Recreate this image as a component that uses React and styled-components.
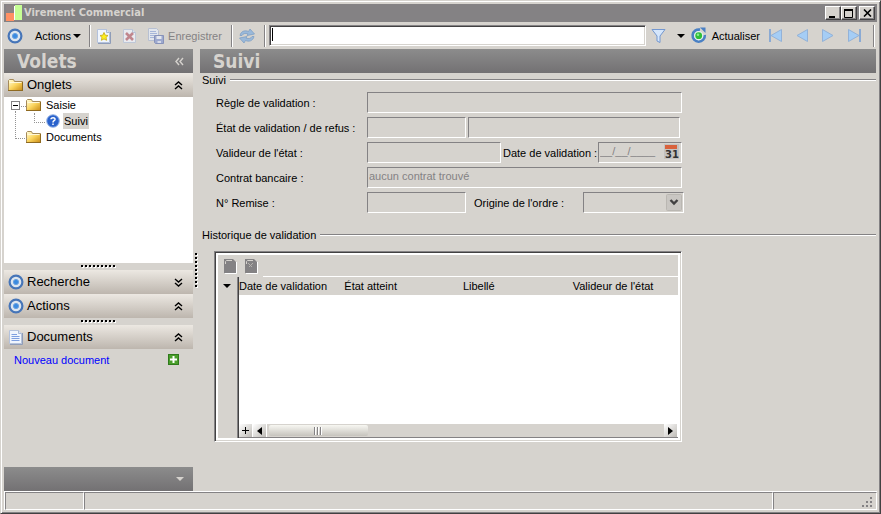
import React from 'react';
import styled, { createGlobalStyle, ThemeProvider } from 'styled-components';

const theme = {
    face: '#d6d3ce',
    shadow: '#848284',
    dark: '#424142',
    font: '"Liberation Sans", Arial, sans-serif',
    titleFont: '"DejaVu Sans Condensed", "DejaVu Sans", sans-serif',
};

const GlobalStyle = createGlobalStyle`
    * {
        box-sizing: border-box;
    }

    body {
        margin: 0;
        background: ${theme.face};
        color: black;
        font-family: ${theme.font};
        font-size: 11px;
        line-height: 16px;
    }

    button, input, select {
        font: inherit;
        color: inherit;
    }

    svg {
        display: block;
        flex: none;
    }
`;

const Window = styled.div`
    min-height: 100vh;
    display: flex;
    flex-direction: column;
    padding: 2px 2px 1px 2px;
    background: ${({ theme }) => theme.face};
    border: 1px solid;
    border-color: ${({ theme }) => `${theme.face} ${theme.dark} ${theme.dark} ${theme.face}`};
    box-shadow: inset 1px 1px 0 white, inset -1px -1px 0 ${({ theme }) => theme.shadow};
`;

const TitleBar = styled.header`
    height: 18px;
    display: flex;
    align-items: center;
    margin: 1px 1px 0 1px;
    padding: 0 2px;
    background: ${({ theme }) => theme.shadow};
    color: ${({ theme }) => theme.face};

    h1 {
        flex: 1;
        margin: 0 0 0 1px;
        font-family: ${({ theme }) => theme.titleFont};
        font-size: 11px;
        line-height: 18px;
        font-weight: bold;
    }
`;

const CaptionButton = styled.button`
    width: 16px;
    height: 14px;
    display: flex;
    align-items: center;
    justify-content: center;
    padding: 0;
    margin-left: ${({ $gap }) => ($gap ? '2px' : '0')};
    color: black;
    background: ${({ theme }) => theme.face};
    border: 1px solid;
    border-color: ${({ theme }) => `white ${theme.dark} ${theme.dark} white`};
    box-shadow: inset -1px -1px 0 ${({ theme }) => theme.shadow};
`;

const Toolbar = styled.div`
    height: 27px;
    display: flex;
    align-items: center;
    padding: 0 2px 0 3px;
    margin: 0 1px;
`;

const ToolButton = styled.button`
    height: 22px;
    display: flex;
    align-items: center;
    gap: ${({ $gap }) => $gap || 4}px;
    padding: 0;
    margin-right: ${({ $after }) => $after || 0}px;
    background: none;
    border: none;

    &:disabled {
        color: ${({ theme }) => theme.shadow};
    }
`;

const Separator = styled.span`
    width: 2px;
    height: 22px;
    margin-right: ${({ $after }) => $after || 0}px;
    border-left: 1px solid ${({ theme }) => theme.shadow};
    border-right: 1px solid white;
`;

const SearchBox = styled.div`
    flex: 1;
    position: relative;
    display: flex;
    margin-right: 5px;

    &::after {
        content: '';
        position: absolute;
        left: 3px;
        top: 3px;
        width: 1px;
        height: 13px;
        background: black;
    }
`;

const SearchInput = styled.input`
    width: 100%;
    height: 21px;
    padding: 0 4px;
    background: white;
    border: 1px solid;
    border-color: ${({ theme }) => `${theme.shadow} white white ${theme.shadow}`};
    box-shadow: inset 1px 1px 0 ${({ theme }) => theme.dark}, inset -1px -1px 0 ${({ theme }) => theme.face};
    outline: none;
`;

const Body = styled.div`
    flex: 1;
    display: flex;
    margin: 0 1px;
`;

const Sidebar = styled.aside`
    width: 189px;
    display: flex;
    flex-direction: column;
`;

const Banner = styled.div`
    height: 24px;
    display: flex;
    align-items: center;
    justify-content: space-between;
    padding: 0 9px 0 13px;
    color: ${({ theme }) => theme.face};
    background: linear-gradient(#8c8c8c, #737173);

    h2 {
        margin: 0;
        font-family: ${({ theme }) => theme.titleFont};
        font-size: 19px;
        line-height: 24px;
        font-weight: bold;
    }

    button {
        display: flex;
        padding: 0;
        color: inherit;
        background: none;
        border: none;
    }
`;

const PaneHeader = styled.button`
    width: 100%;
    height: 24px;
    display: flex;
    align-items: center;
    gap: 3px;
    padding: 0 10px 0 4px;
    font-size: 13px;
    text-align: left;
    background: linear-gradient(#ece8e2, #bdb6ae);
    border: none;

    svg:first-child {
        width: 16px;
    }

    span {
        flex: 1;
    }
`;

const Tree = styled.ul`
    flex: 1 1 166px;
    max-height: 166px;
    margin: 0;
    padding: 0 0 0 7px;
    list-style: none;
    background: white;
`;

const Branch = styled.ul`
    margin: 0;
    padding: 0 0 0 26px;
    list-style: none;
`;

const TreeItem = styled.li`
    position: relative;

    &::before {
        content: '';
        position: absolute;
        left: ${({ $nested }) => ($nested ? '-3px' : '4px')};
        top: ${({ $top }) => $top}px;
        width: ${({ $nested }) => ($nested ? '10px' : '11px')};
        height: ${({ $reach }) => $reach}px;
        border: 0 dotted #949494;
        border-left-width: ${({ $reach }) => ($reach > 1 ? '1px' : '0')};
        border-bottom-width: 1px;
    }
`;

const TreeRow = styled.div`
    height: 16px;
    display: flex;
    align-items: center;
    gap: 3px;
    padding-left: ${({ $nested }) => ($nested ? '9px' : '15px')};
`;

const TreeLabel = styled.span`
    padding: 0 1px;
    background: ${({ $selected, theme }) => ($selected ? theme.face : 'transparent')};
`;

const Expander = styled.button`
    position: absolute;
    left: 0;
    top: 4px;
    width: 9px;
    height: 9px;
    padding: 0;
    background: white;
    border: 1px solid ${({ theme }) => theme.shadow};

    &::before {
        content: '';
        display: block;
        width: 5px;
        height: 1px;
        margin: auto;
        background: black;
    }
`;

const Grip = styled.div`
    height: 7px;
    display: flex;
    justify-content: center;
    align-items: center;

    &::before {
        content: '';
        width: 35px;
        height: 3px;
        background:
            repeating-linear-gradient(90deg, black 0 2px, transparent 2px 4px) 0 0 / 100% 2px no-repeat,
            repeating-linear-gradient(90deg, transparent 0 1px, white 1px 3px, transparent 3px 4px) 0 1px / 100% 2px no-repeat;
    }
`;

const SideGrip = styled.div`
    width: 7px;
    display: flex;
    justify-content: center;
    align-items: center;

    &::before {
        content: '';
        width: 3px;
        height: 35px;
        background:
            repeating-linear-gradient(black 0 2px, transparent 2px 4px) 0 0 / 2px 100% no-repeat,
            repeating-linear-gradient(transparent 0 1px, white 1px 3px, transparent 3px 4px) 1px 0 / 2px 100% no-repeat;
    }
`;

const Links = styled.div`
    flex: 1;
    display: flex;
    align-items: flex-start;
    justify-content: space-between;
    padding: 3px 14px 0 10px;

    a {
        color: #0000ff;
        text-decoration: none;
    }

    svg {
        margin-top: 2px;
    }
`;

const Main = styled.main`
    flex: 1;
    min-width: 0;
    padding-right: 1px;
`;

const Group = styled.fieldset`
    min-width: 0;
    margin: 0;
    padding: 0 0 0 ${({ $indent }) => $indent}px;
    border: none;

    legend {
        width: calc(100% + ${({ $indent }) => $indent}px);
        height: 14px;
        display: flex;
        align-items: center;
        gap: 4px;
        padding: 0 0 0 2px;
        margin-left: -${({ $indent }) => $indent}px;
    }

    legend::after {
        content: '';
        flex: 1;
        height: 2px;
        background: linear-gradient(${({ theme }) => theme.shadow} 50%, white 50%);
    }
`;

const Rows = styled.div`
    display: flex;
    flex-direction: column;
    gap: 4px;
    padding: 5px 0 15px 0;
`;

const FormRow = styled.div`
    display: flex;
    align-items: center;
    height: 21px;
`;

const RowLabel = styled.label`
    width: 151px;
`;

const InnerLabel = styled.label`
    width: ${({ $width }) => $width}px;
    padding-left: ${({ $pad }) => $pad}px;
    white-space: nowrap;
`;

const Field = styled.input`
    width: ${({ $width }) => $width}px;
    height: 21px;
    margin-right: ${({ $after }) => $after || 0}px;
    padding: 0 1px 3px 1px;
    color: ${({ theme }) => theme.shadow};
    background: transparent;
    border: 1px solid;
    border-color: ${({ theme }) => `${theme.shadow} white white ${theme.shadow}`};
    outline: none;
`;

const Overlaid = styled.div`
    position: relative;
    display: flex;

    button, svg.arrow {
        position: absolute;
        right: 2px;
        top: 2px;
        padding: 0;
        border: none;
        background: none;
        pointer-events: none;
    }
`;

const Select = styled.select`
    width: 101px;
    height: 21px;
    appearance: none;
    background: transparent;
    border: 1px solid;
    border-color: ${({ theme }) => `${theme.shadow} white white ${theme.shadow}`};
    border-radius: 0;
    opacity: 1;
`;

const GridFrame = styled.div`
    width: 468px;
    max-width: 100%;
    margin: 9px 0 0 -2px;
    padding: 2px;
    background: white;
    border: 1px solid;
    border-color: ${({ theme }) => `${theme.shadow} white white ${theme.shadow}`};
    box-shadow: inset 1px 1px 0 ${({ theme }) => theme.dark}, inset -1px -1px 0 ${({ theme }) => theme.face};
`;

const GridTools = styled.div`
    height: 22px;
    display: flex;
    align-items: center;
    gap: 8px;
    margin: 1px 1px 0 1px;
    padding-left: 6px;
    background: ${({ theme }) => theme.face};

    &::after {
        content: '';
        flex: 1;
        align-self: flex-end;
        margin-left: -3px;
        height: 1px;
        background: white;
    }
`;

const GridBody = styled.div`
    display: flex;
    height: 161px;
    margin: 0 1px 1px 1px;
`;

const RowHeads = styled.button`
    width: 21px;
    display: flex;
    justify-content: center;
    padding: 7px 3px 0 0;
    background: ${({ theme }) => theme.face};
    border: none;
    border-right: 1px solid ${({ theme }) => theme.dark};
    box-shadow: inset -1px 0 0 ${({ theme }) => theme.shadow};
`;

const GridContent = styled.div`
    flex: 1;
    min-width: 0;
    display: flex;
    flex-direction: column;
    justify-content: space-between;
`;

const Table = styled.table`
    width: 100%;
    table-layout: fixed;
    border-collapse: collapse;

    th {
        height: 18px;
        padding: 0;
        font-weight: normal;
        text-align: left;
        white-space: nowrap;
        background: ${({ theme }) => theme.face};
    }
`;

const ScrollBar = styled.div`
    height: 14px;
    display: flex;
    background: ${({ theme }) => theme.face};
    border-bottom: 1px solid ${({ theme }) => theme.shadow};
`;

const ScrollButton = styled.button`
    width: 14px;
    display: flex;
    align-items: center;
    justify-content: center;
    padding: 0;
    background: linear-gradient(135deg, #ffffff, #bdbab5);
    border: none;
    border-right: 1px solid white;
`;

const ScrollTrack = styled.div`
    flex: 1;
    padding: 1px 2px;
`;

const Thumb = styled.div`
    width: 99px;
    height: 11px;
    display: flex;
    align-items: center;
    justify-content: center;
    background: linear-gradient(#f7f7f2, #c6c3bd);
    border-radius: 2px;

    &::before {
        content: '';
        width: 9px;
        height: 8px;
        background: repeating-linear-gradient(90deg, #848284 0 1px, white 1px 2px, transparent 2px 3px);
    }
`;

const StatusBar = styled.footer`
    height: 19px;
    display: flex;
    margin: 0 1px 2px 1px;
    border-top: 1px solid white;
    border-left: 1px solid white;
`;

const StatusCell = styled.div`
    width: ${({ $width }) => ($width ? `${$width}px` : 'auto')};
    flex: ${({ $width }) => ($width ? 'none' : '1')};
    display: flex;
    justify-content: flex-end;
    align-items: flex-end;
    padding: 1px 3px;
    border: 1px solid;
    border-color: ${({ theme }) => `${theme.shadow} white white ${theme.shadow}`};
`;

const TargetIcon = () => (
    <svg width='16' height='16' viewBox='0 0 16 16'>
        <circle cx='8' cy='8' r='6.4' fill='#dde6ef' stroke='#4675b8' strokeWidth='2.2' />
        <circle cx='8' cy='8' r='2.6' fill='#3b8be0' stroke='#6aa2e0' />
    </svg>
);

const FolderIcon = () => (
    <svg width='16' height='14' viewBox='0 0 16 14'>
        <defs>
            <linearGradient id='folder' x2='1' y2='1'>
                <stop offset='0.1' stopColor='#fff7c8' />
                <stop offset='0.5' stopColor='#fbd55e' />
                <stop offset='1' stopColor='#c98a14' />
            </linearGradient>
        </defs>
        <path d='M0.5 12.5V2.5L1.5 1.5H5.500L6.500 3.500H14.500V12.500Z' fill='url(#folder)' stroke='#a58a5a' />
        <path d='M1.500 4.500H13.500' stroke='#fff8d8' />
        <path d='M0 12.500H15M14.500 4V13' stroke='#8f6a20' />
    </svg>
);

const HelpIcon = () => (
    <svg width='14' height='14' viewBox='0 0 14 14'>
        <circle cx='7' cy='7' r='6.300' fill='#2a62cc' stroke='#9ab8e8' />
        <path d='M5 5.200C5 3.200 9.200 3.200 9 5.400C8.800 6.800 7 6.600 7 8.400M7 9.600V11' fill='none' stroke='white' strokeWidth='1.500' />
    </svg>
);

const PageIcon = ({ kind }) => (
    <svg width='14' height='16' viewBox='0 0 14 16' opacity={kind === 'delete' ? 0.7 : 1}>
        {kind !== 'delete' && <path d='M1 15.500H13.500V4' fill='none' stroke='#8f9db8' />}
        <path d='M0.500 1.500H9.500L12.500 4.500V14.500H0.500Z' fill='#f0f5fd' stroke='#b4c2dc' />
        <path d='M9.500 1.500V4.500H12.500' fill='#dde7f6' stroke='#a9b9d6' />
        {kind === 'text' && <path d='M2.500 5.500H8M2.500 7.500H10.500M2.500 9.500H10.500M2.500 11.500H10.500' stroke='#7d9fe0' />}
        {kind === 'new' && <path d='M7 4.500L8.200 7.200L11 7.500L9 9.400L9.600 12.300L7 10.900L4.400 12.300L5 9.400L3 7.500L5.800 7.200Z' fill='#fff01c' stroke='#c9b020' strokeWidth='0.900' />}
        {kind === 'delete' && <path d='M3 5L10 12M10 5L3 12' stroke='#b86672' strokeWidth='2.600' />}
    </svg>
);

const SaveIcon = () => (
    <svg width='16' height='16' viewBox='0 0 16 16' opacity='0.8'>
        <path d='M0.500 0.500H8.500L10.500 2.500V12.500H0.500Z' fill='#e6ebf5' stroke='#b0bcd4' />
        <path d='M2 3.500H8M2 5.500H9M2 7.500H6M2 9.500H6' stroke='#9bb0dc' />
        <path d='M6.500 7.500H15.500V15.500H7.500L6.500 14.500Z' fill='#8f9fd0' stroke='#7482b4' />
        <path d='M8.500 8H13.500V11H8.500Z' fill='#e8ecf6' />
        <path d='M9.500 13H13V15H9.500Z' fill='#d8def0' />
    </svg>
);

const SyncIcon = () => (
    <svg width='18' height='18' viewBox='0 0 18 18'>
        <path d='M2 8.500C3 4 7 3 10.500 4.500L12 2L16.500 7L9 8.500L10 6.800C7 6 5 6.500 4 8.500Z' fill='#9ab9da' stroke='#7f9fc4' strokeWidth='0.800' />
        <path d='M16 9.500C15 14 11 15 7.500 13.500L6 16L1.500 11L9 9.500L8 11.200C11 12 13 11.500 14 9.500Z' fill='#9ab9da' stroke='#7f9fc4' strokeWidth='0.800' />
    </svg>
);

const FunnelIcon = () => (
    <svg width='15' height='16' viewBox='0 0 15 16'>
        <path d='M1 1.500H14L9 8V14.500L6 13V8Z' fill='#d5e6fb' stroke='#7397d0' />
    </svg>
);

const RefreshIcon = () => (
    <svg width='18' height='17' viewBox='0 0 18 17'>
        <path d='M10 2.700A6 6 0 1 0 14.700 8' fill='none' stroke='#4a80c4' strokeWidth='2.800' />
        <path d='M10 0.500H15.500V6Z' fill='#4a80c4' />
        <circle cx='8.700' cy='8.700' r='4.700' fill='#e4f0ee' />
        <circle cx='8.700' cy='8.700' r='3.400' fill='#2fbf38' />
        <circle cx='8' cy='7.800' r='1.300' fill='#8be890' />
    </svg>
);

const NavIcon = ({ back, bar }) => (
    <svg width='16' height='15' viewBox='0 0 16 15'>
        <g transform={back ? 'translate(16 0) scale(-1 1)' : undefined} stroke='#93b2d8'>
            <path d='M2.500 1.500V13.500L13 7.500Z' fill='#a5cdf5' />
            {bar && <path d='M14 1V14' stroke='#8aaad4' strokeWidth='2' />}
        </g>
    </svg>
);

const Triangle = ({ color = 'black' }) => (
    <svg width='8' height='4' viewBox='0 0 8 4'><path d='M0 0H8L4 4Z' fill={color} /></svg>
);

const Chevrons = ({ turn = 0 }) => (
    <svg width='9' height='9' viewBox='0 0 9 9'>
        <g transform={`rotate(${turn} 4.5 4.5)`} fill='none' stroke='currentColor' strokeWidth='1.400'>
            <path d='M1 4L4.500 1L8 4M1 8L4.500 5L8 8' />
        </g>
    </svg>
);

const CalendarIcon = () => (
    <svg width='17' height='16' viewBox='0 0 17 16'>
        <rect x='1' y='0' width='15' height='15' fill='#c4c2c0' />
        <rect x='2' y='1' width='12' height='4' fill='#d9623c' />
        <text x='9' y='14' textAnchor='middle' fontFamily='DejaVu Sans' fontSize='10' fontWeight='bold' fill='#333333'>31</text>
    </svg>
);

const GreyPage = ({ star }) => (
    <svg width='13' height='15' viewBox='0 0 13 15'>
        <path d='M1 14.500H12.500V3' fill='none' stroke='white' />
        <path d='M0 0H9L12 3V14H0Z' fill='#848284' />
        <path d='M1.500 5V2.500L2.500 1.500H8' fill='none' stroke='#d6d3ce' />
        {star && <path d='M3 4L7 8M8 4L4 8' stroke='#b5b2ad' />}
    </svg>
);

const App = () => {
    return (
        <ThemeProvider theme={theme}>
            <GlobalStyle />
            <Window>
                <TitleBar>
                    <svg width='17' height='18' viewBox='0 0 17 18'>
                        <rect x='0' y='1' width='9' height='8' fill='#8c8484' />
                        <rect x='0' y='9' width='8' height='8' fill='#ff9163' />
                        <rect x='8' y='2' width='1' height='14' fill='#ffffff' />
                        <rect x='9' y='1' width='7' height='15' fill='#c6ff94' />
                    </svg>
                    <h1>Virement Commercial</h1>
                    <CaptionButton aria-label='Réduire'>
                        <svg width='10' height='9'><rect x='1' y='7' width='6' height='2' /></svg>
                    </CaptionButton>
                    <CaptionButton aria-label='Agrandir'>
                        <svg width='10' height='9'><path d='M0.500 0V8.500H8.500V0M0 1H9' fill='none' stroke='black' /><rect width='9' height='2' /></svg>
                    </CaptionButton>
                    <CaptionButton aria-label='Fermer' $gap>
                        <svg width='9' height='8'><path d='M1 0.500L8 7.500M8 0.500L1 7.500' stroke='black' strokeWidth='1.600' /></svg>
                    </CaptionButton>
                </TitleBar>
                <Toolbar>
                    <ToolButton $gap={12} $after={8}>
                        <TargetIcon />
                        <ToolButton as='span' $gap={2}>Actions <Triangle /></ToolButton>
                    </ToolButton>
                    <Separator $after={6} />
                    <ToolButton aria-label='Nouveau' $after={12}><PageIcon kind='new' /></ToolButton>
                    <ToolButton aria-label='Supprimer' $after={11} disabled><PageIcon kind='delete' /></ToolButton>
                    <ToolButton $after={9} disabled><SaveIcon />Enregistrer</ToolButton>
                    <Separator $after={5} />
                    <ToolButton aria-label='Synchroniser' $after={8} disabled><SyncIcon /></ToolButton>
                    <Separator $after={3} />
                    <SearchBox>
                        <SearchInput aria-label='Rechercher' />
                    </SearchBox>
                    <ToolButton aria-label='Filtrer' $gap={11} $after={5}><FunnelIcon /><Triangle /></ToolButton>
                    <ToolButton $after={8}><RefreshIcon />Actualiser</ToolButton>
                    <ToolButton aria-label='Premier' $after={10}><NavIcon back bar /></ToolButton>
                    <ToolButton aria-label='Précédent' $after={10}><NavIcon back /></ToolButton>
                    <ToolButton aria-label='Suivant' $after={10}><NavIcon /></ToolButton>
                    <ToolButton aria-label='Dernier' $after={11}><NavIcon bar /></ToolButton>
                    <Separator />
                </Toolbar>
                <Body>
                    <Sidebar>
                        <Banner>
                            <h2>Volets</h2>
                            <button aria-label='Masquer les volets'><Chevrons turn={-90} /></button>
                        </Banner>
                        <PaneHeader><FolderIcon /><span>Onglets</span><Chevrons /></PaneHeader>
                        <Tree>
                            <TreeItem $top={8} $reach={1}>
                                <Expander aria-label='Réduire Saisie' />
                                <TreeRow><FolderIcon /><TreeLabel>Saisie</TreeLabel></TreeRow>
                                <Branch>
                                    <TreeItem $nested $top={0} $reach={9}>
                                        <TreeRow $nested><HelpIcon /><TreeLabel $selected>Suivi</TreeLabel></TreeRow>
                                    </TreeItem>
                                </Branch>
                            </TreeItem>
                            <TreeItem $top={-18} $reach={27}>
                                <TreeRow><FolderIcon /><TreeLabel>Documents</TreeLabel></TreeRow>
                            </TreeItem>
                        </Tree>
                        <Grip />
                        <PaneHeader><TargetIcon /><span>Recherche</span><Chevrons turn={180} /></PaneHeader>
                        <PaneHeader><TargetIcon /><span>Actions</span><Chevrons /></PaneHeader>
                        <Grip />
                        <PaneHeader><PageIcon kind='text' /><span>Documents</span><Chevrons /></PaneHeader>
                        <Links>
                            <a href='#document'>Nouveau document</a>
                            <svg width='11' height='11' viewBox='0 0 11 11'>
                                <rect x='0.500' y='0.500' width='10' height='10' fill='#4a9e2a' stroke='#2f7a1c' />
                                <path d='M5.500 2V9M2 5.500H9' stroke='white' strokeWidth='2' />
                            </svg>
                        </Links>
                        <Banner>
                            <span />
                            <button aria-label='Options des volets'><Triangle color='#d6d3ce' /></button>
                        </Banner>
                    </Sidebar>
                    <SideGrip />
                    <Main>
                        <Banner><h2>Suivi</h2></Banner>
                        <Group $indent={16}>
                            <legend>Suivi</legend>
                            <Rows>
                                <FormRow>
                                    <RowLabel htmlFor='regle'>Règle de validation :</RowLabel>
                                    <Field id='regle' $width={315} readOnly />
                                </FormRow>
                                <FormRow>
                                    <RowLabel htmlFor='etat'>État de validation / de refus :</RowLabel>
                                    <Field id='etat' $width={99} $after={2} readOnly />
                                    <Field aria-label='Libellé de l’état' $width={212} readOnly />
                                </FormRow>
                                <FormRow>
                                    <RowLabel htmlFor='valideur'>Valideur de l'état :</RowLabel>
                                    <Field id='valideur' $width={134} readOnly />
                                    <InnerLabel htmlFor='date' $width={97} $pad={2}>Date de validation :</InnerLabel>
                                    <Overlaid>
                                        <Field id='date' $width={84} defaultValue='__/__/____' readOnly />
                                        <button aria-label='Calendrier'><CalendarIcon /></button>
                                    </Overlaid>
                                </FormRow>
                                <FormRow>
                                    <RowLabel htmlFor='contrat'>Contrat bancaire :</RowLabel>
                                    <Field id='contrat' $width={315} defaultValue='aucun contrat trouvé' readOnly />
                                </FormRow>
                                <FormRow>
                                    <RowLabel htmlFor='remise'>N° Remise :</RowLabel>
                                    <Field id='remise' $width={99} readOnly />
                                    <InnerLabel htmlFor='origine' $width={117} $pad={8}>Origine de l'ordre :</InnerLabel>
                                    <Overlaid>
                                        <Select id='origine' disabled><option /></Select>
                                        <svg className='arrow' width='16' height='17' viewBox='0 0 16 17'>
                                            <rect x='0.500' y='0.500' width='15' height='16' rx='1' fill='#c9c6c2' stroke='#bab7b2' />
                                            <path d='M4.500 6L8 9.500L11.500 6' fill='none' stroke='#424142' strokeWidth='2.400' />
                                        </svg>
                                    </Overlaid>
                                </FormRow>
                            </Rows>
                        </Group>
                        <Group $indent={16}>
                            <legend>Historique de validation</legend>
                            <GridFrame>
                                <GridTools>
                                    <GreyPage />
                                    <GreyPage star />
                                </GridTools>
                                <GridBody>
                                    <RowHeads aria-label='Menu de la grille'><Triangle /></RowHeads>
                                    <GridContent>
                                        <Table>
                                            <colgroup>
                                                <col style={{ width: '24%' }} />
                                                <col style={{ width: '27%' }} />
                                                <col style={{ width: '25%' }} />
                                                <col style={{ width: '24%' }} />
                                            </colgroup>
                                            <thead>
                                                <tr>
                                                    <th>Date de validation</th>
                                                    <th>État atteint</th>
                                                    <th>Libellé</th>
                                                    <th>Valideur de l'état</th>
                                                </tr>
                                            </thead>
                                        </Table>
                                        <ScrollBar>
                                            <ScrollButton aria-label='Ajouter'>
                                                <svg width='7' height='7'><path d='M3.500 0V7M0 3.500H7' stroke='black' /></svg>
                                            </ScrollButton>
                                            <ScrollButton aria-label='Défiler à gauche'>
                                                <svg width='5' height='8'><path d='M5 0V8L0 4Z' /></svg>
                                            </ScrollButton>
                                            <ScrollTrack><Thumb /></ScrollTrack>
                                            <ScrollButton aria-label='Défiler à droite'>
                                                <svg width='5' height='8'><path d='M0 0V8L5 4Z' /></svg>
                                            </ScrollButton>
                                        </ScrollBar>
                                    </GridContent>
                                </GridBody>
                            </GridFrame>
                        </Group>
                    </Main>
                </Body>
                <StatusBar>
                    <StatusCell $width={79} />
                    <StatusCell />
                    <StatusCell $width={104}>
                        <svg width='11' height='11' fill='#848284'>
                            <path d='M8 0h2v2h-2zM4 4h2v2h-2zM8 4h2v2h-2zM0 8h2v2h-2zM4 8h2v2h-2zM8 8h2v2h-2z' />
                        </svg>
                    </StatusCell>
                </StatusBar>
            </Window>
        </ThemeProvider>
    );
};

export default App;
